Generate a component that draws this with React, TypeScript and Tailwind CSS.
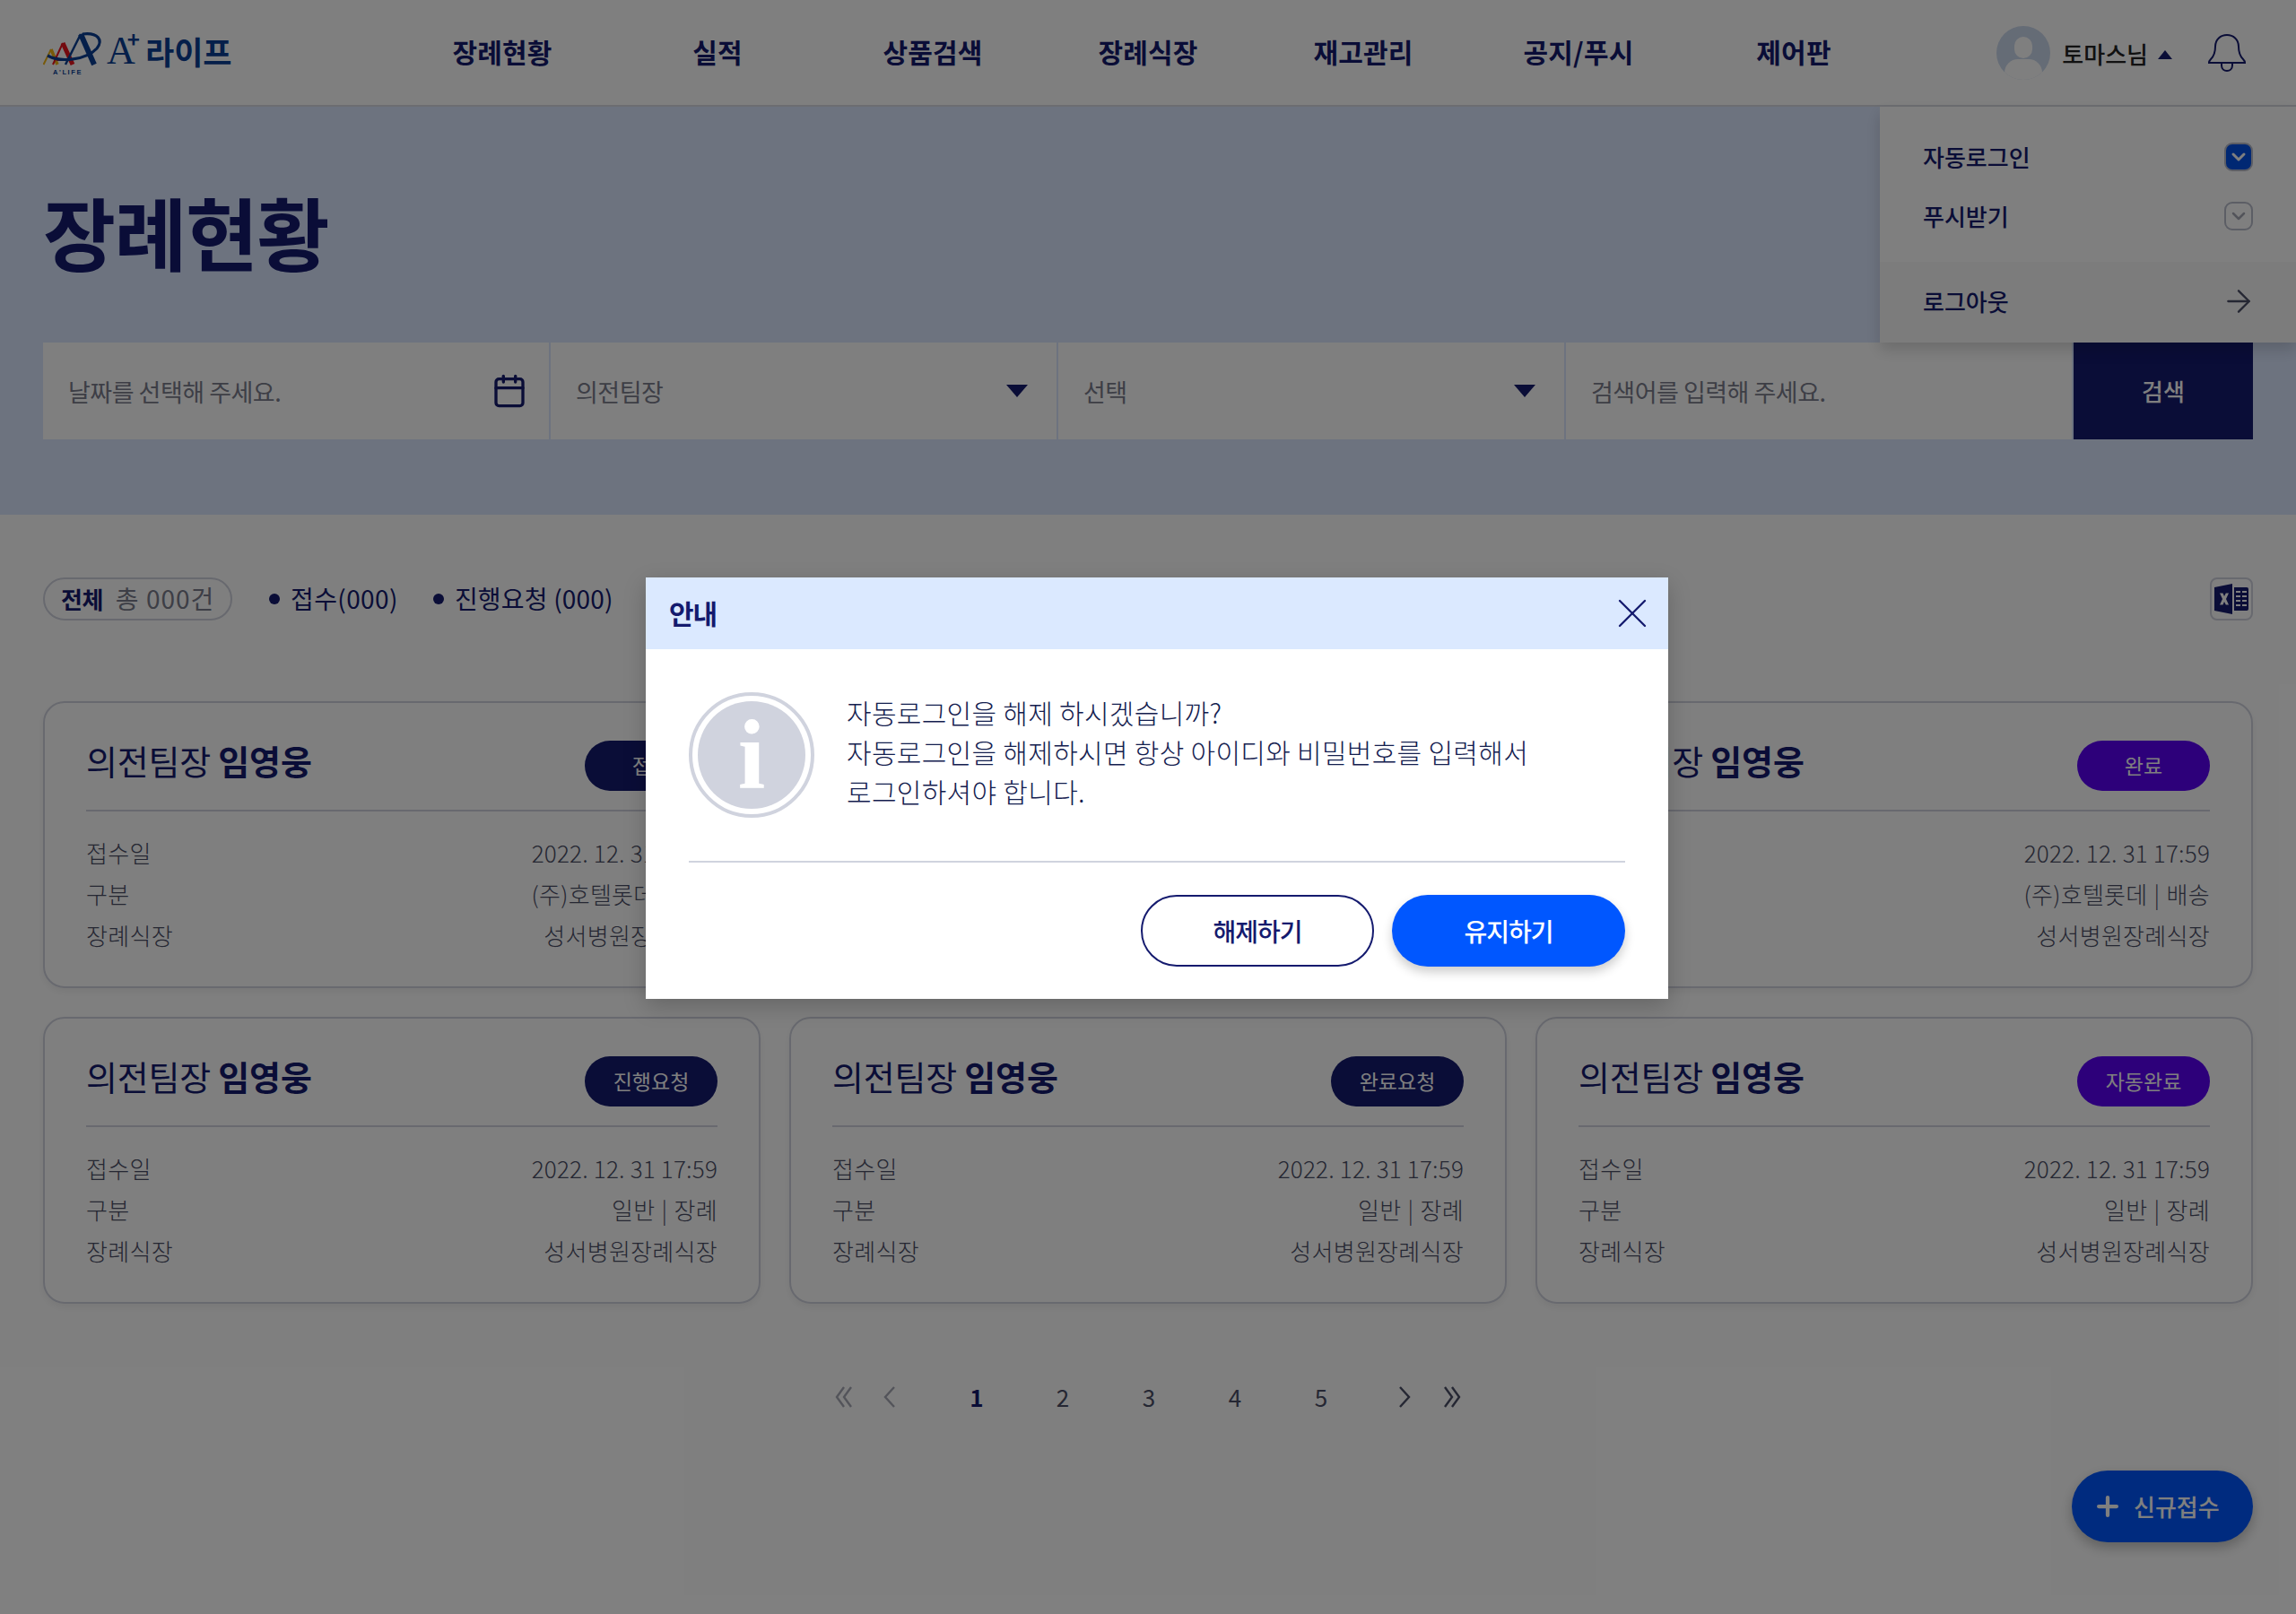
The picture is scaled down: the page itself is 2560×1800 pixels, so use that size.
import { ChevronDown, X, ArrowRight, Calendar, Plus } from "lucide-react";

const NAV = ["장례현황", "실적", "상품검색", "장례식장", "재고관리", "공지/푸시", "제어판"];

interface CardData {
  status: string;
  badge: string;
  kind: string;
}

const CARDS: CardData[] = [
  { status: "접수", badge: "bg-[#141a6e]", kind: "(주)호텔롯데 | 배송" },
  { status: "진행", badge: "bg-[#141a6e]", kind: "(주)호텔롯데 | 배송" },
  { status: "완료", badge: "bg-[#5a00f4]", kind: "(주)호텔롯데 | 배송" },
  { status: "진행요청", badge: "bg-[#141a6e]", kind: "일반 | 장례" },
  { status: "완료요청", badge: "bg-[#141a6e]", kind: "일반 | 장례" },
  { status: "자동완료", badge: "bg-[#5a00f4]", kind: "일반 | 장례" },
];

function Logo() {
  return (
    <div className="flex items-start w-[230px] h-[60px]">
      <svg width="70" height="56" viewBox="0 0 70 56" fill="none" className="shrink-0 mt-[1px]">
        <path d="M0.5 42 L9 25" stroke="#f0b414" strokeWidth="2" />
        <path d="M9 25 L16 42" stroke="#f0b414" strokeWidth="3.5" />
        <path d="M11 42 L22 18" stroke="#e8141f" strokeWidth="2" />
        <path d="M22 18 L33 42" stroke="#e8141f" strokeWidth="5" />
        <path d="M15 37 H29" stroke="#e8141f" strokeWidth="2" />
        <path d="M25 42 L42 8" stroke="#0b3f94" strokeWidth="2.5" />
        <path d="M42 8 L57 42" stroke="#0b3f94" strokeWidth="6" />
        <path d="M5 32 C20 40 48 37 60 24 C67 15 62 6 44 8" stroke="#0b3f94" strokeWidth="3.2" />
        <text x="11" y="53" fontSize="7.5" fontWeight="700" fill="#0b3f94" fontFamily="Liberation Sans, sans-serif" letterSpacing="1.6">
          A'LIFE
        </text>
      </svg>
      <span className="ml-[1px] mt-[4px] text-[44px] leading-[48px] text-[#0b3f94] [font-family:'Liberation_Serif',serif]">A</span>
      <span className="ml-[-9px] mt-[2px] text-[24px] leading-[24px] font-bold text-[#0b3f94]">+</span>
      <span className="ml-[6px] mt-[5px] text-[35px] leading-[46px] font-bold text-[#0b3f94]">라이프</span>
    </div>
  );
}

function Header() {
  return (
    <header className="h-[119px] bg-white border-b-2 border-[#d9dbe3] flex items-center pl-[48px] pr-[55px]">
      <Logo />
      <nav className="ml-[162px] grid grid-cols-7 w-[1680px] pb-[3px]">
        {NAV.map((n) => (
          <a key={n} className="text-center text-[30px] font-bold tracking-[0.2px] text-[#141a6e]">
            {n}
          </a>
        ))}
      </nav>
      <div className="ml-auto flex items-center">
        <div className="relative w-[60px] h-[60px] rounded-full bg-[#cbd8ec] overflow-hidden">
          <div className="absolute left-[20px] top-[12px] w-[20px] h-[24px] rounded-full bg-white" />
          <div className="absolute left-[9px] top-[37px] w-[42px] h-[30px] rounded-full bg-white" />
        </div>
        <span className="ml-[13px] pt-[2px] text-[26px] font-medium text-[#222]">토마스님</span>
        <span className="ml-[11px] mt-[4px] w-0 h-0 border-x-[8px] border-x-transparent border-b-[10px] border-b-[#141a6e]" />
        <svg width="44" height="44" viewBox="0 0 44 44" fill="none" stroke="#141a6e" strokeWidth="2" className="ml-[39px]">
          <path d="M2 33 Q2 31 4 29 C7 26 9 22 9 15 C9 7 15 2 22 2 C29 2 35 7 35 15 C35 22 37 26 40 29 Q42 31 42 33 Z" />
          <path d="M16 34 V36 C16 40 19 42 22 42 C25 42 28 40 28 36 V34" />
        </svg>
      </div>
    </header>
  );
}

function Field({ label, chevron, calendar }: { label: string; chevron?: boolean; calendar?: boolean }) {
  return (
    <div className="flex-1 flex items-center justify-between pl-[28px] pr-[32px] border-r-2 border-[#dbe7ff] last:border-r-0">
      <span className="pt-[2px] text-[27px] text-[#7a7c8c] tracking-[-0.5px]">{label}</span>
      {calendar && <Calendar className="w-[40px] h-[40px] mr-[-8px] text-[#141a6e]" strokeWidth={2} />}
      {chevron && <span className="w-0 h-0 border-x-[12px] border-x-transparent border-t-[14px] border-t-[#141a6e]" />}
    </div>
  );
}

function Hero() {
  return (
    <section className="h-[455px] bg-[#dbe7ff] px-[48px] pt-[92px]">
      <h1 className="text-[88px] leading-[92px] font-bold tracking-[-1.5px] text-[#141a6e]">장례현황</h1>
      <div className="mt-[79px] h-[108px] flex bg-white">
        <Field label="날짜를 선택해 주세요." calendar />
        <Field label="의전팀장" chevron />
        <Field label="선택" chevron />
        <Field label="검색어를 입력해 주세요." />
        <button className="w-[200px] shrink-0 bg-[#141a6e] pb-[2px] text-white text-[26px] font-medium">검색</button>
      </div>
    </section>
  );
}

function FilterRow() {
  return (
    <div className="flex items-center h-[48px] text-[#141a6e]">
      <div className="w-[211px] h-[48px] rounded-full border-2 border-[#d0d3de] flex items-center pl-[18px] pb-[2px]">
        <span className="text-[26px] font-bold tracking-[-0.5px]">전체</span>
        <span className="ml-[14px] text-[28px] tracking-[1px] text-[#7a7c8c]">총 000건</span>
      </div>
      <span className="ml-[41px] w-[12px] h-[12px] rounded-full bg-[#141a6e]" />
      <span className="ml-[12px] pb-[2px] text-[28px] tracking-[0.4px]">접수(000)</span>
      <span className="ml-[39px] w-[12px] h-[12px] rounded-full bg-[#141a6e]" />
      <span className="ml-[12px] pb-[2px] text-[28px] tracking-[0.2px]">진행요청 (000)</span>
      <div className="ml-auto w-[48px] h-[48px] rounded-[8px] border-2 border-[#d0d3de] flex items-center justify-center">
        <svg width="38" height="34" viewBox="0 0 38 34">
          <path d="M0 4 L20 0 V34 L0 30 Z" fill="#141a6e" />
          <path d="M6 10.5 H9.5 L11 14 L12.8 10.5 H16 L13 17 L16 23.5 H12.8 L11 20 L9.5 23.5 H6 L9 17 Z" fill="#fff" />
          <path d="M22 4 H36 Q38 4 38 6 V28 Q38 30 36 30 H22 Z" fill="#141a6e" />
          <path d="M24 8 H29 V10 H24 Z M31 8 H36 V10 H31 Z M24 13 H29 V15 H24 Z M31 13 H36 V15 H31 Z M24 18 H29 V20 H24 Z M31 18 H36 V20 H31 Z M24 23 H29 V25 H24 Z M31 23 H36 V25 H31 Z" fill="#fff" />
        </svg>
      </div>
    </div>
  );
}

function Card({ data }: { data: CardData }) {
  return (
    <div className="h-[320px] rounded-[24px] border-2 border-[#d0d3de] px-[46px] shadow-[0_4px_8px_rgba(0,0,0,0.06)]">
      <div className="h-[121px] pt-[41px] flex justify-between items-start border-b-2 border-[#d0d3de]">
        <div className="text-[38px] leading-[46px] tracking-[-0.2px] text-[#141a6e]">
          의전팀장 <b className="font-bold">임영웅</b>
        </div>
        <span className={`w-[148px] h-[56px] mt-[1px] pb-[2px] rounded-full flex items-center justify-center text-[23px] text-white ${data.badge}`}>
          {data.status}
        </span>
      </div>
      <dl className="pt-[23px] text-[26px] leading-[46px] font-light tracking-[0.3px] [word-spacing:1px] text-[#4b4e66]">
        <div className="flex justify-between">
          <dt>접수일</dt>
          <dd className="tracking-[0.2px] [word-spacing:0px]">2022. 12. 31 17:59</dd>
        </div>
        <div className="flex justify-between">
          <dt>구분</dt>
          <dd>{data.kind}</dd>
        </div>
        <div className="flex justify-between">
          <dt>장례식장</dt>
          <dd>성서병원장례식장</dd>
        </div>
      </dl>
    </div>
  );
}

function Chevrons({ dir, count, dim }: { dir: "left" | "right"; count: 1 | 2; dim?: boolean }) {
  const color = dim ? "#a7a9b5" : "#4b4e66";
  const d =
    dir === "left"
      ? count === 2
        ? "M10 1 L2 12 L10 23 M18 1 L10 12 L18 23"
        : "M12 1 L2 12 L12 23"
      : count === 2
        ? "M2 1 L10 12 L2 23 M10 1 L18 12 L10 23"
        : "M2 1 L12 12 L2 23";
  return (
    <svg width={count === 2 ? 20 : 14} height="24" viewBox={count === 2 ? "0 0 20 24" : "0 0 14 24"} fill="none">
      <path d={d} stroke={color} strokeWidth="2.4" />
    </svg>
  );
}

function Pagination() {
  return (
    <div className="mt-[88px] flex items-center justify-center h-[32px] text-[#4b4e66] text-[26px]">
      <Chevrons dir="left" count={2} dim />
      <span className="ml-[34px]">
        <Chevrons dir="left" count={1} dim />
      </span>
      <div className="ml-[42px] flex pb-[2px]">
        {[1, 2, 3, 4, 5].map((p) => (
          <span key={p} className={`w-[96px] text-center ${p === 1 ? "font-bold text-[#141a6e]" : ""}`}>
            {p}
          </span>
        ))}
      </div>
      <span className="ml-[38px]">
        <Chevrons dir="right" count={1} />
      </span>
      <span className="ml-[36px]">
        <Chevrons dir="right" count={2} />
      </span>
    </div>
  );
}

function UserMenu() {
  return (
    <div className="absolute right-0 top-[119px] w-[464px] h-[263px] bg-white shadow-[0_8px_16px_rgba(0,0,0,0.16)]">
      <div className="h-[173px] pl-[48px] pr-[48px] pt-[36px] text-[26px] font-medium text-[#141a6e]">
        <div className="flex items-center justify-between h-[40px]">
          <span className="pb-[1px]">자동로그인</span>
          <span className="w-[32px] h-[32px] rounded-[9px] bg-[#0050e6] border-2 border-[#b8bccb] flex items-center justify-center">
            <ChevronDown className="w-[24px] h-[24px] text-white" strokeWidth={3} />
          </span>
        </div>
        <div className="flex items-center justify-between h-[40px] mt-[26px]">
          <span className="pb-[1px]">푸시받기</span>
          <span className="w-[32px] h-[32px] rounded-[9px] border-2 border-[#b8bccb] flex items-center justify-center">
            <ChevronDown className="w-[24px] h-[24px] text-[#a7a9b5]" strokeWidth={2.5} />
          </span>
        </div>
      </div>
      <div className="h-[90px] bg-[#f8f8f8] flex items-center justify-between pl-[48px] pr-[44px] pb-[3px] text-[26px] font-medium text-[#141a6e]">
        로그아웃
        <ArrowRight className="w-[40px] h-[40px] text-[#4b4e66]" strokeWidth={1.4} />
      </div>
    </div>
  );
}

function InfoIcon() {
  return (
    <div className="w-[140px] h-[140px] shrink-0 rounded-full border-[4px] border-[#d0d3de] p-[6px]">
      <div className="w-full h-full rounded-full bg-[#d0d3de] flex items-center justify-center text-[110px] leading-none font-bold text-white [font-family:'Liberation_Serif',serif]">
        i
      </div>
    </div>
  );
}

function Modal() {
  return (
    <div className="absolute left-[720px] top-[644px] w-[1140px] h-[470px] bg-white shadow-[0_8px_24px_rgba(0,0,0,0.2)]">
      <div className="h-[80px] bg-[#dbe9ff] flex items-center justify-between pl-[26px] pr-[12px]">
        <span className="pb-[2px] text-[30px] font-bold tracking-[-1px] text-[#141a6e]">안내</span>
        <X className="w-[56px] h-[56px] text-[#141a6e]" strokeWidth={1} />
      </div>
      <div className="px-[48px]">
        <div className="flex items-start h-[238px] pt-[48px] border-b-2 border-[#d0d3de]">
          <InfoIcon />
          <p className="ml-[36px] text-[30px] leading-[44px] font-light tracking-[0.3px] text-[#14204f]">
            자동로그인을 해제 하시겠습니까?
            <br />
            자동로그인을 해제하시면 항상 아이디와 비밀번호를 입력해서
            <br />
            로그인하셔야 합니다.
          </p>
        </div>
        <div className="flex justify-end gap-[20px] pt-[36px]">
          <button className="w-[260px] h-[80px] pb-[1px] rounded-full border-2 border-[#141a6e] text-[28px] font-medium tracking-[-1px] text-[#141a6e]">
            해제하기
          </button>
          <button className="w-[260px] h-[80px] pb-[1px] rounded-full bg-[#0057ff] text-[28px] font-medium tracking-[-1px] text-white shadow-[0_6px_12px_rgba(0,0,0,0.2)]">
            유지하기
          </button>
        </div>
      </div>
    </div>
  );
}

export default function App() {
  return (
    <div className="relative w-[2560px] h-[1800px] overflow-hidden bg-white [font-family:'Noto_Sans_CJK_KR','Noto_Sans',sans-serif]">
      <Header />
      <Hero />
      <main className="px-[48px] pt-[70px]">
        <FilterRow />
        <div className="mt-[90px] grid grid-cols-3 gap-x-[32px] gap-y-[32px]">
          {CARDS.map((c, i) => (
            <Card key={i} data={c} />
          ))}
        </div>
        <Pagination />
      </main>
      <button className="absolute right-[48px] bottom-[80px] w-[202px] h-[80px] pl-[23px] pb-[2px] rounded-full bg-[#0057ff] flex items-center gap-[12px] text-[26px] font-medium text-white shadow-[0_6px_14px_rgba(0,0,0,0.25)]">
        <Plus className="w-[34px] h-[34px] mt-[2px]" strokeWidth={3} />
        신규접수
      </button>
      <UserMenu />
      <div className="absolute inset-0 bg-black/50" />
      <Modal />
    </div>
  );
}
